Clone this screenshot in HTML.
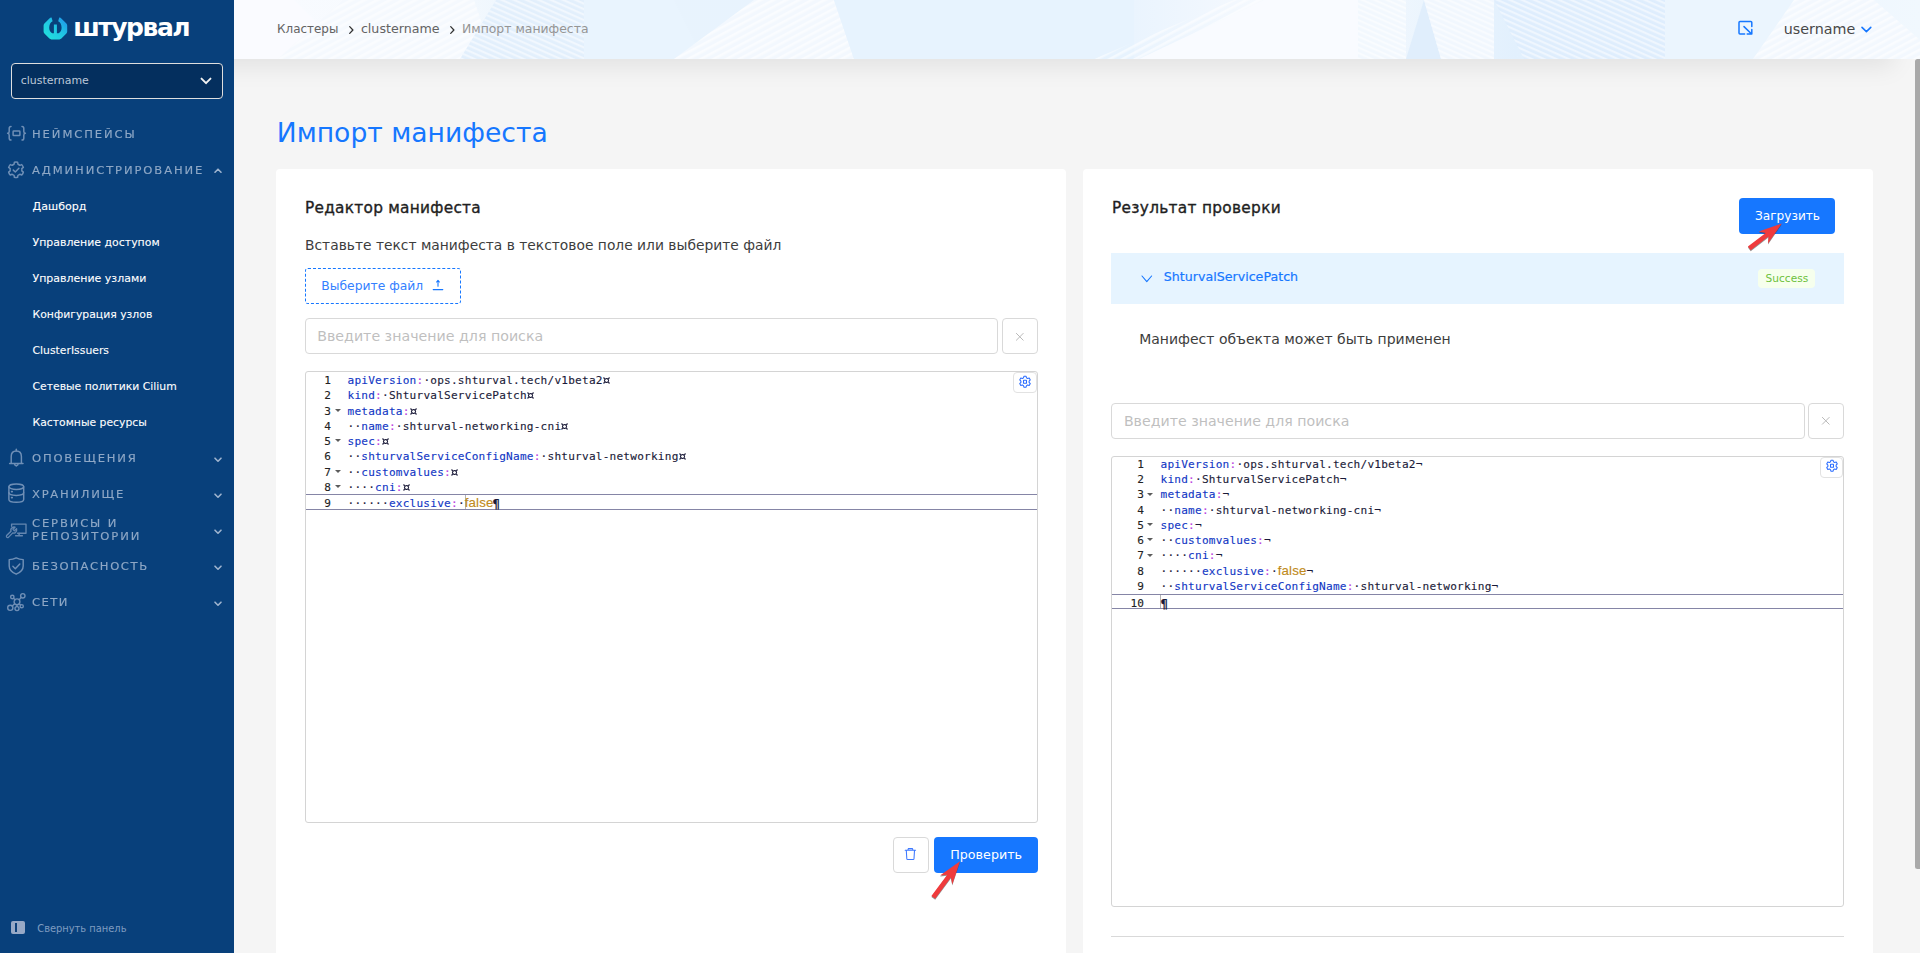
<!DOCTYPE html>
<html lang="ru">
<head>
<meta charset="utf-8">
<title>Импорт манифеста</title>
<style>
html,body{margin:0;padding:0}
body{width:1920px;height:953px;overflow:hidden;position:relative;background:#f5f5f5;font-family:"DejaVu Sans","Liberation Sans",sans-serif}
.t{position:absolute;white-space:pre;line-height:1.2;display:block}
.abs{position:absolute}
#side{left:0;top:0;width:234px;height:953px;background:#08407b}
#hdr{left:234px;top:0;width:1686px;height:59px;background:#f4f9fe}
#hsh{left:200px;top:0;width:1694px;height:59px;box-shadow:0 8px 24px rgba(0,0,0,.08)}
#hdr svg{position:absolute;left:0;top:0}
.card{background:#fff;border-radius:4px 4px 0 0}
.box{box-sizing:border-box;border:1px solid #d9d9d9;border-radius:4px;background:#fff}
.btn{background:#1677ff;border-radius:4px}
.ed{box-sizing:border-box;border:1px solid #d4d4d4;border-radius:3px;background:#fff;overflow:hidden}
.ln{position:absolute;left:0;height:15.25px;line-height:15.25px;font-family:"DejaVu Sans Mono","Liberation Mono",monospace;font-size:11.1px;letter-spacing:0.217px;white-space:pre;color:#1a1a38;-webkit-text-stroke:0.12px currentColor}
.ln .n{position:absolute;right:0;top:0;color:#222}
.k{color:#1036c4}.c{color:#b940e0}.b{color:#c08a20;font-family:"Liberation Sans","DejaVu Sans",sans-serif;font-size:13.3px;letter-spacing:0.12px;line-height:0}
.e{display:inline-block;transform:scale(1.35);transform-origin:50% 58%}
.p{display:inline-block;font-weight:bold;transform:translateY(0.8px) scale(1.05,1.12)}
.cur{position:absolute;width:1px;background:#b4b4b4}
.fold{position:absolute;width:0;height:0;border-left:3px solid transparent;border-right:3px solid transparent;border-top:3.6px solid #5c5c5c}
.al{position:absolute;left:0;right:0;height:15.25px;box-sizing:border-box;border-top:1px solid #8585a6;border-bottom:1px solid #8585a6}
</style>
</head>
<body>
<div id="hsh" class="abs"></div>
<!-- ============ SIDEBAR ============ -->
<aside>
<div id="side" class="abs"></div>
<!-- logo -->
<svg class="abs" style="left:43px;top:17px" width="25" height="23" viewBox="0 0 25 23">
<defs><linearGradient id="lg" x1="0" y1="1" x2="1" y2="0"><stop offset="0" stop-color="#22e6dc"/><stop offset="0.55" stop-color="#20c4e4"/><stop offset="1" stop-color="#1f8fea"/></linearGradient></defs>
<path d="M7.2 0.8 L8.6 0.6 L9.6 4.2 Q6.2 6 6.2 10.8 Q6.2 14.6 9.2 16.2 L10.9 16.2 L10.9 7.4 L13.9 7.4 L13.9 16.2 L15.6 16.2 Q18.6 14.6 18.6 10.8 Q18.6 6 15.2 4.2 L16.2 0.6 L17.6 0.8 L23.4 6.4 Q24.2 7.2 24.2 8.4 L24.2 14.6 Q24.2 15.8 23.4 16.6 L18.4 21.6 Q17.6 22.4 16.4 22.4 L8.4 22.4 Q7.2 22.4 6.4 21.6 L1.4 16.6 Q0.6 15.8 0.6 14.6 L0.6 8.4 Q0.6 7.2 1.4 6.4 Z" fill="url(#lg)"/>
</svg>
<!-- namespaces {=} -->
<svg class="abs" style="left:6px;top:125px" width="21" height="17" viewBox="0 0 21 17" fill="none" stroke="#6f8fb6" stroke-width="1.5" stroke-linecap="round" stroke-linejoin="round">
<path d="M5 1.6 Q3.2 1.6 3.2 3.4 L3.2 6.4 Q3.2 8.2 1.6 8.3 Q3.2 8.4 3.2 10.2 L3.2 13.2 Q3.2 15 5 15"/>
<path d="M16 1.6 Q17.8 1.6 17.8 3.4 L17.8 6.4 Q17.8 8.2 19.4 8.3 Q17.8 8.4 17.8 10.2 L17.8 13.2 Q17.8 15 16 15"/>
<rect x="7.1" y="6.1" width="6.8" height="4.5" rx="0.6"/>
</svg>
<!-- admin gear-check -->
<svg class="abs" style="left:6px;top:160px" width="20" height="20" viewBox="0 0 20 20" fill="none" stroke="#6f8fb6" stroke-width="1.45" stroke-linecap="round" stroke-linejoin="round">
<path d="M8.08 4.22 L8.39 2.22 A7.75 7.75 0 0 1 11.61 2.22 L11.92 4.22 A5.9 5.9 0 0 1 13.87 5.35 L15.76 4.61 A7.75 7.75 0 0 1 17.37 7.41 L15.79 8.67 A5.9 5.9 0 0 1 15.79 10.93 L17.37 12.19 A7.75 7.75 0 0 1 15.76 14.99 L13.87 14.25 A5.9 5.9 0 0 1 11.92 15.38 L11.61 17.38 A7.75 7.75 0 0 1 8.39 17.38 L8.08 15.38 A5.9 5.9 0 0 1 6.13 14.25 L4.24 14.99 A7.75 7.75 0 0 1 2.63 12.19 L4.21 10.93 A5.9 5.9 0 0 1 4.21 8.67 L2.63 7.41 A7.75 7.75 0 0 1 4.24 4.61 L6.13 5.35 A5.9 5.9 0 0 1 8.08 4.22 Z"/>
<path d="M7.3 10.1 L9.3 12 L12.9 8.2"/>
</svg>
<!-- bell -->
<svg class="abs" style="left:8px;top:448px" width="17" height="20" viewBox="0 0 17 20" fill="none" stroke="#6f8fb6" stroke-width="1.45" stroke-linecap="round" stroke-linejoin="round">
<path d="M8.3 1.3 L8.3 2.8"/>
<path d="M3.2 15.2 L3.2 8.4 Q3.2 3 8.3 3 Q13.4 3 13.4 8.4 L13.4 15.2"/>
<path d="M1.6 15.4 L15 15.4"/>
<path d="M6.6 16.6 L8.3 18 L10 16.6"/>
</svg>
<!-- database -->
<svg class="abs" style="left:7px;top:483px" width="19" height="21" viewBox="0 0 19 21" fill="none" stroke="#6f8fb6" stroke-width="1.45" stroke-linecap="round" stroke-linejoin="round">
<ellipse cx="9.3" cy="3.7" rx="7.4" ry="2.7"/>
<path d="M1.9 3.7 L1.9 16.4 Q1.9 19.2 9.3 19.2 Q16.7 19.2 16.7 16.4 L16.7 3.7"/>
<path d="M1.9 9.6 Q1.9 12.4 9.3 12.4 Q16.7 12.4 16.7 9.6"/>
<path d="M4.6 8.6 L5.2 8.6 M4.6 14.6 L5.2 14.6" stroke-width="1.7"/>
</svg>
<!-- services: monitor + wrench -->
<svg class="abs" style="left:5px;top:522px" width="23" height="18" viewBox="0 0 23 18" fill="none" stroke="#6486b0" stroke-width="1.35" stroke-linecap="round" stroke-linejoin="round">
<path d="M6.6 4.2 L6.6 2.1 L21 2.1 L21 11.2 L12.6 11.2"/>
<path d="M14.6 11.4 L13.6 13.6 M10.6 13.7 L17.4 13.7"/>
<path d="M1.6 13.6 L6 9.2 Q5.2 6.6 7.6 5.3 Q8.8 4.8 10 5.2 L8 7.2 L9.4 8.8 L11.6 6.8 Q12.2 9.2 10.4 10.6 Q9 11.4 7.8 10.9 L3.4 15.4 Q2.4 15.9 1.7 15.1 Q1.2 14.3 1.6 13.6 Z"/>
</svg>
<!-- shield -->
<svg class="abs" style="left:7px;top:556px" width="19" height="20" viewBox="0 0 19 20" fill="none" stroke="#6f8fb6" stroke-width="1.45" stroke-linecap="round" stroke-linejoin="round">
<path d="M9.2 1.9 Q12.4 3.6 16.2 3.6 L16.2 10 Q16.2 15.4 9.2 18.2 Q2.2 15.4 2.2 10 L2.2 3.6 Q6 3.6 9.2 1.9 Z"/>
<path d="M5.9 10.3 L8.3 12.7 L12.8 8"/>
</svg>
<!-- network -->
<svg class="abs" style="left:6px;top:592px" width="21" height="21" viewBox="0 0 21 21" fill="none" stroke="#6f8fb6" stroke-width="1.4" stroke-linecap="round" stroke-linejoin="round">
<circle cx="11" cy="9.8" r="2.9"/>
<circle cx="6.3" cy="5" r="1.7"/>
<circle cx="16.8" cy="3.8" r="2.2"/>
<circle cx="4.3" cy="15.8" r="2.6"/>
<circle cx="11" cy="16.6" r="2"/>
<circle cx="15.7" cy="14.2" r="1.6"/>
<path d="M7.6 6.3 L8.9 7.7 M13.2 7.8 L15.2 5.4 M8.7 11.7 L6.2 14 M11 12.8 L11 14.5 M13.2 11.7 L14.6 13"/>
</svg>
<!-- chevrons -->
<svg class="abs" style="left:213px;top:166px" width="10" height="9" viewBox="0 0 10 9"><path d="M2 6.2 L5 3.2 L8 6.2" fill="none" stroke="#9fb4cf" stroke-width="1.6" stroke-linecap="round" stroke-linejoin="round"/></svg>
<svg class="abs" style="left:213px;top:455px" width="10" height="9" viewBox="0 0 10 9"><path d="M2 3.2 L5 6.2 L8 3.2" fill="none" stroke="#9fb4cf" stroke-width="1.6" stroke-linecap="round" stroke-linejoin="round"/></svg>
<svg class="abs" style="left:213px;top:491px" width="10" height="9" viewBox="0 0 10 9"><path d="M2 3.2 L5 6.2 L8 3.2" fill="none" stroke="#9fb4cf" stroke-width="1.6" stroke-linecap="round" stroke-linejoin="round"/></svg>
<svg class="abs" style="left:213px;top:527px" width="10" height="9" viewBox="0 0 10 9"><path d="M2 3.2 L5 6.2 L8 3.2" fill="none" stroke="#9fb4cf" stroke-width="1.6" stroke-linecap="round" stroke-linejoin="round"/></svg>
<svg class="abs" style="left:213px;top:563px" width="10" height="9" viewBox="0 0 10 9"><path d="M2 3.2 L5 6.2 L8 3.2" fill="none" stroke="#9fb4cf" stroke-width="1.6" stroke-linecap="round" stroke-linejoin="round"/></svg>
<svg class="abs" style="left:213px;top:599px" width="10" height="9" viewBox="0 0 10 9"><path d="M2 3.2 L5 6.2 L8 3.2" fill="none" stroke="#9fb4cf" stroke-width="1.6" stroke-linecap="round" stroke-linejoin="round"/></svg>
<!-- collapse icon -->
<div class="abs" style="left:11px;top:921px;width:14px;height:13px;background:#97a9c6;border-radius:2px"></div>
<div class="abs" style="left:15px;top:923px;width:2px;height:9px;background:#0d417b"></div>

<div class="abs" style="left:11px;top:63px;width:212px;height:36px;box-sizing:border-box;border:1px solid #dedede;border-radius:4px;background:#042f5e"></div>
<svg class="abs" style="left:199px;top:75px" width="14" height="12" viewBox="0 0 14 12"><path d="M2.5 3.6 L7 8.2 L11.5 3.6" fill="none" stroke="#f2f2f2" stroke-width="1.9" stroke-linecap="round" stroke-linejoin="round"/></svg>
<nav>
<span class="t" id="logo" style='left:73.20px;top:12.70px;font-family:"DejaVu Sans","Liberation Sans",sans-serif;font-size:25px;font-weight:700;color:#ffffff;letter-spacing:-1.472px;'>штурвал</span>
<span class="t" id="csel" style='left:20.80px;top:74.30px;font-family:"DejaVu Sans","Liberation Sans",sans-serif;font-size:10.93px;font-weight:400;color:#bcc8d8;letter-spacing:0.006px;'>clustername</span>
<span class="t" id="mh0" style='left:32.20px;top:127.85px;font-family:"DejaVu Sans","Liberation Sans",sans-serif;font-size:10.6px;font-weight:400;color:#8fa8c6;letter-spacing:1.762px;-webkit-text-stroke:0.15px #8fa8c6;transform:scaleX(1.09);transform-origin:0 0;'>НЕЙМСПЕЙСЫ</span>
<span class="t" id="mh1" style='left:32.20px;top:164.15px;font-family:"DejaVu Sans","Liberation Sans",sans-serif;font-size:10.6px;font-weight:400;color:#8fa8c6;letter-spacing:1.739px;-webkit-text-stroke:0.15px #8fa8c6;transform:scaleX(1.09);transform-origin:0 0;'>АДМИНИСТРИРОВАНИЕ</span>
<span class="t" id="mh2" style='left:32.20px;top:452.05px;font-family:"DejaVu Sans","Liberation Sans",sans-serif;font-size:10.6px;font-weight:400;color:#8fa8c6;letter-spacing:1.677px;-webkit-text-stroke:0.15px #8fa8c6;transform:scaleX(1.09);transform-origin:0 0;'>ОПОВЕЩЕНИЯ</span>
<span class="t" id="mh3" style='left:32.20px;top:488.05px;font-family:"DejaVu Sans","Liberation Sans",sans-serif;font-size:10.6px;font-weight:400;color:#8fa8c6;letter-spacing:1.599px;-webkit-text-stroke:0.15px #8fa8c6;transform:scaleX(1.09);transform-origin:0 0;'>ХРАНИЛИЩЕ</span>
<span class="t" id="mh4" style='left:32.20px;top:516.65px;font-family:"DejaVu Sans","Liberation Sans",sans-serif;font-size:10.6px;font-weight:400;color:#8fa8c6;letter-spacing:1.703px;-webkit-text-stroke:0.15px #8fa8c6;transform:scaleX(1.09);transform-origin:0 0;'>СЕРВИСЫ И</span>
<span class="t" id="mh5" style='left:32.20px;top:530.15px;font-family:"DejaVu Sans","Liberation Sans",sans-serif;font-size:10.6px;font-weight:400;color:#8fa8c6;letter-spacing:1.728px;-webkit-text-stroke:0.15px #8fa8c6;transform:scaleX(1.09);transform-origin:0 0;'>РЕПОЗИТОРИИ</span>
<span class="t" id="mh6" style='left:32.20px;top:560.05px;font-family:"DejaVu Sans","Liberation Sans",sans-serif;font-size:10.6px;font-weight:400;color:#8fa8c6;letter-spacing:1.503px;-webkit-text-stroke:0.15px #8fa8c6;transform:scaleX(1.09);transform-origin:0 0;'>БЕЗОПАСНОСТЬ</span>
<span class="t" id="mh7" style='left:32.20px;top:596.05px;font-family:"DejaVu Sans","Liberation Sans",sans-serif;font-size:10.6px;font-weight:400;color:#8fa8c6;letter-spacing:1.356px;-webkit-text-stroke:0.15px #8fa8c6;transform:scaleX(1.09);transform-origin:0 0;'>СЕТИ</span>
<span class="t" id="sm0" style='left:32.50px;top:199.90px;font-family:"DejaVu Sans","Liberation Sans",sans-serif;font-size:11.1px;font-weight:400;color:#ffffff;letter-spacing:0.005px;-webkit-text-stroke:0.1px #fff;'>Дашборд</span>
<span class="t" id="sm1" style='left:32.50px;top:235.90px;font-family:"DejaVu Sans","Liberation Sans",sans-serif;font-size:10.93px;font-weight:400;color:#ffffff;letter-spacing:0.004px;-webkit-text-stroke:0.1px #fff;'>Управление доступом</span>
<span class="t" id="sm2" style='left:32.50px;top:271.90px;font-family:"DejaVu Sans","Liberation Sans",sans-serif;font-size:10.97px;font-weight:400;color:#ffffff;letter-spacing:0.002px;-webkit-text-stroke:0.1px #fff;'>Управление узлами</span>
<span class="t" id="sm3" style='left:32.50px;top:307.80px;font-family:"DejaVu Sans","Liberation Sans",sans-serif;font-size:10.83px;font-weight:400;color:#ffffff;letter-spacing:0.003px;-webkit-text-stroke:0.1px #fff;'>Конфигурация узлов</span>
<span class="t" id="sm4" style='left:32.50px;top:344.90px;font-family:"DejaVu Sans","Liberation Sans",sans-serif;font-size:10.82px;font-weight:400;color:#ffffff;letter-spacing:0.006px;-webkit-text-stroke:0.1px #fff;'>ClusterIssuers</span>
<span class="t" id="sm5" style='left:32.50px;top:380.90px;font-family:"DejaVu Sans","Liberation Sans",sans-serif;font-size:10.82px;font-weight:400;color:#ffffff;letter-spacing:0.007px;-webkit-text-stroke:0.1px #fff;'>Сетевые политики Cilium</span>
<span class="t" id="sm6" style='left:32.50px;top:416.90px;font-family:"DejaVu Sans","Liberation Sans",sans-serif;font-size:10.82px;font-weight:400;color:#ffffff;letter-spacing:0.005px;-webkit-text-stroke:0.1px #fff;'>Кастомные ресурсы</span>
<span class="t" id="collapse" style='left:37.25px;top:923.10px;font-family:"DejaVu Sans","Liberation Sans",sans-serif;font-size:9.88px;font-weight:400;color:#7f9cc0;letter-spacing:0.000px;'>Свернуть панель</span>
</nav>
</aside>

<!-- ============ HEADER ============ -->
<header>
<div id="hdr" class="abs"><svg width="1686" height="59" viewBox="0 0 1686 59" preserveAspectRatio="none">
<defs>
<pattern id="st1" width="6" height="6" patternUnits="userSpaceOnUse" patternTransform="rotate(-28)"><rect width="6" height="2.6" fill="#ffffff" fill-opacity=".55"/></pattern>
<pattern id="st2" width="5" height="5" patternUnits="userSpaceOnUse" patternTransform="rotate(24)"><rect width="5" height="2.2" fill="#ffffff" fill-opacity=".5"/></pattern>
<linearGradient id="hg" x1="0" x2="1" y1="0" y2="0"><stop offset="0" stop-color="#f9fbff"/><stop offset=".12" stop-color="#f6fafe"/><stop offset=".2" stop-color="#e8f3fd"/><stop offset=".52" stop-color="#e8f3fe"/><stop offset=".62" stop-color="#f7fafe"/><stop offset=".66" stop-color="#f4f9fe"/><stop offset=".76" stop-color="#e2f0fd"/><stop offset=".86" stop-color="#e9f4fe"/><stop offset="1" stop-color="#f1f8fe"/></linearGradient>
</defs>
<rect width="1686" height="59" fill="url(#hg)"/>
<polygon points="0,0 60,0 120,59 0,59" fill="#fafbff"/>
<polygon points="44,59 110,0 240,0 260,59" fill="#f5f9fe"/>
<polygon points="44,59 110,0 240,0 260,59" fill="url(#st1)"/>
<polygon points="226,59 262,0 350,0 350,59" fill="#e2effc"/>
<polygon points="226,59 262,0 350,0 350,59" fill="url(#st2)"/>
<polygon points="350,0 440,0 470,59 350,59" fill="#e9f4fe"/>
<polygon points="440,59 520,0 600,0 620,59" fill="#f3f8fe"/>
<polygon points="440,59 520,0 600,0 620,59" fill="url(#st1)"/>
<polygon points="620,59 600,0 900,0 900,59" fill="#e7f3fe"/>
<polygon points="905,59 1030,0 1124,0 1124,59" fill="#f9fbff"/>
<polygon points="860,59 1000,0 1030,0 905,59" fill="url(#st1)"/>
<polygon points="1124,0 1172,0 1172,59 1124,59" fill="#f2f8fe"/>
<polygon points="1124,0 1172,0 1172,59 1124,59" fill="url(#st2)"/>
<polygon points="1172,59 1190,0 1207,59" fill="#e0eefc"/>
<polygon points="1190,0 1260,0 1260,59 1207,59" fill="#f1f7fe"/>
<polygon points="1190,0 1260,0 1260,59 1207,59" fill="url(#st2)"/>
<polygon points="1260,0 1431,0 1431,59 1290,59" fill="#deedfd"/>
<polygon points="1260,0 1431,0 1431,59 1290,59" fill="url(#st2)"/>
<polygon points="1431,0 1560,0 1519,59 1431,59" fill="#ebf5fe"/>
<polygon points="1519,59 1560,0 1640,0 1686,40 1686,59" fill="#f3f8fe"/>
<polygon points="1519,59 1560,0 1640,0 1686,40 1686,59" fill="url(#st1)"/>
</svg>
</div>
<svg class="abs" style="left:346.6px;top:24.6px" width="8" height="10" viewBox="0 0 8 10"><path d="M2.7 1.6 L5.9 5 L2.7 8.4" fill="none" stroke="#333" stroke-width="1.3" stroke-linecap="round" stroke-linejoin="round"/></svg>
<svg class="abs" style="left:447.7px;top:24.6px" width="8" height="10" viewBox="0 0 8 10"><path d="M2.7 1.6 L5.9 5 L2.7 8.4" fill="none" stroke="#333" stroke-width="1.3" stroke-linecap="round" stroke-linejoin="round"/></svg>
<svg class="abs" style="left:1737px;top:19px" width="18" height="18" viewBox="0 0 18 18" fill="none" stroke="#1677ff" stroke-width="1.5" stroke-linecap="round" stroke-linejoin="round">
<path d="M7.6 15.1 L3 15.1 Q2 15.1 2 14.1 L2 3.5 Q2 2.5 3 2.5 L13.8 2.5 Q14.8 2.5 14.8 3.5 L14.8 7.6"/>
<path d="M7 7.6 L14.6 15 M14.8 10.6 L14.8 15.1 L10.2 15.1"/>
</svg>
<svg class="abs" style="left:1860px;top:25px" width="13" height="9" viewBox="0 0 13 9"><path d="M2 2.4 L6.4 6.6 L10.8 2.4" fill="none" stroke="#1677ff" stroke-width="1.6" stroke-linecap="round" stroke-linejoin="round"/></svg>

<span class="t" id="bc0" style='left:277.00px;top:21.80px;font-family:"DejaVu Sans","Liberation Sans",sans-serif;font-size:11.96px;font-weight:400;color:#636363;letter-spacing:0.004px;'>Кластеры</span>
<span class="t" id="bc1" style='left:360.90px;top:20.80px;font-family:"DejaVu Sans","Liberation Sans",sans-serif;font-size:12.65px;font-weight:400;color:#636363;letter-spacing:0.008px;'>clustername</span>
<span class="t" id="bc2" style='left:462.00px;top:21.80px;font-family:"DejaVu Sans","Liberation Sans",sans-serif;font-size:12.41px;font-weight:400;color:#959595;letter-spacing:0.005px;'>Импорт манифеста</span>
<span class="t" id="user" style='left:1783.75px;top:20.50px;font-family:"DejaVu Sans","Liberation Sans",sans-serif;font-size:14.29px;font-weight:400;color:#484848;letter-spacing:0.006px;'>username</span>
</header>

<!-- ============ MAIN ============ -->
<main>
<span class="t" id="title" style='left:276.80px;top:116.90px;font-family:"DejaVu Sans","Liberation Sans",sans-serif;font-size:26.59px;font-weight:400;color:#1677ff;letter-spacing:0.005px;'>Импорт манифеста</span>
<!-- left card: manifest editor -->
<section>
<div class="abs card" style="left:276px;top:169px;width:790px;height:790px"></div>
<div class="abs" style="left:305px;top:268px;width:156px;height:36px;box-sizing:border-box;border:1px dashed #1677ff;border-radius:3px"></div>
<div class="abs box" style="left:305px;top:318px;width:693px;height:36px"></div>
<div class="abs box" style="left:1002px;top:318px;width:36px;height:36px"></div>
<div class="abs ed" id="ed1" style="left:305px;top:371px;width:733px;height:452px"><div class="al" style="top:122px;height:16px"></div>
<div class="cur" style="top:123px;height:14px;left:159.4px"></div>
<div class="ln" style="top:1.10px;width:25.2px"><span class="n">1</span></div>
<div class="ln" style="top:1.10px;left:41.5px"><span class="k">apiVersion</span><span class="c">:</span>·ops.shturval.tech/v1beta2<span class="e">¤</span></div>
<div class="ln" style="top:16.35px;width:25.2px"><span class="n">2</span></div>
<div class="ln" style="top:16.35px;left:41.5px"><span class="k">kind</span><span class="c">:</span>·ShturvalServicePatch<span class="e">¤</span></div>
<div class="ln" style="top:31.60px;width:25.2px"><span class="n">3</span></div>
<div class="fold" style="left:28.50px;top:36.80px"></div>
<div class="ln" style="top:31.60px;left:41.5px"><span class="k">metadata</span><span class="c">:</span><span class="e">¤</span></div>
<div class="ln" style="top:46.85px;width:25.2px"><span class="n">4</span></div>
<div class="ln" style="top:46.85px;left:41.5px">··<span class="k">name</span><span class="c">:</span>·shturval-networking-cni<span class="e">¤</span></div>
<div class="ln" style="top:62.10px;width:25.2px"><span class="n">5</span></div>
<div class="fold" style="left:28.50px;top:67.30px"></div>
<div class="ln" style="top:62.10px;left:41.5px"><span class="k">spec</span><span class="c">:</span><span class="e">¤</span></div>
<div class="ln" style="top:77.35px;width:25.2px"><span class="n">6</span></div>
<div class="ln" style="top:77.35px;left:41.5px">··<span class="k">shturvalServiceConfigName</span><span class="c">:</span>·shturval-networking<span class="e">¤</span></div>
<div class="ln" style="top:92.60px;width:25.2px"><span class="n">7</span></div>
<div class="fold" style="left:28.50px;top:97.80px"></div>
<div class="ln" style="top:92.60px;left:41.5px">··<span class="k">customvalues</span><span class="c">:</span><span class="e">¤</span></div>
<div class="ln" style="top:107.85px;width:25.2px"><span class="n">8</span></div>
<div class="fold" style="left:28.50px;top:113.05px"></div>
<div class="ln" style="top:107.85px;left:41.5px">····<span class="k">cni</span><span class="c">:</span><span class="e">¤</span></div>
<div class="ln" style="top:123.70px;width:25.2px"><span class="n">9</span></div>
<div class="ln" style="top:123.70px;left:41.5px">······<span class="k">exclusive</span><span class="c">:</span>·<span class="b">false</span><span class="p">¶</span></div></div>
<div class="abs box" style="left:893px;top:837px;width:36px;height:36px"></div>
<div class="abs btn" style="left:934px;top:837px;width:104px;height:36px"></div>
<!-- upload icon -->
<svg class="abs" style="left:431px;top:278px" width="14" height="14" viewBox="0 0 14 14" fill="none" stroke="#1677ff" stroke-width="1.1" stroke-linecap="round" stroke-linejoin="round">
<path d="M7 2.6 L7 8.3 M5.6 4 L7 2.4 L8.4 4 M2.2 11.6 L11.8 11.6"/>
</svg>
<!-- X buttons -->
<svg class="abs" style="left:1014px;top:331px" width="12" height="12" viewBox="0 0 12 12"><path d="M2.4 2.4 L9.2 9.2 M9.2 2.4 L2.4 9.2" fill="none" stroke="#b9b9b9" stroke-width="1" stroke-linecap="round"/></svg>
<!-- gear buttons -->
<div class="abs" style="left:1013px;top:372px;width:24px;height:21px;box-sizing:border-box;border:1px solid #e2e2e2;border-radius:4px;background:#fff"></div>
<svg class="abs" style="left:1018px;top:375px" width="14" height="14" viewBox="0 0 14 14" fill="none" stroke="#2a6cff" stroke-width="1.05" stroke-linejoin="round">
<path d="M5.9 1.3 L8.1 1.3 L8.5 2.9 L9.6 3.5 L11.2 3 L12.3 4.9 L11.1 6.1 L11.1 7.4 L12.3 8.6 L11.2 10.5 L9.6 10 L8.5 10.6 L8.1 12.2 L5.9 12.2 L5.5 10.6 L4.4 10 L2.8 10.5 L1.7 8.6 L2.9 7.4 L2.9 6.1 L1.7 4.9 L2.8 3 L4.4 3.5 L5.5 2.9 Z"/>
<rect x="5.5" y="5.3" width="3" height="3" rx="0.4"/>
</svg>
<!-- trash -->
<svg class="abs" style="left:903px;top:846px" width="15" height="16" viewBox="0 0 15 16" fill="none" stroke="#3d78ff" stroke-width="1.05" stroke-linejoin="round" stroke-linecap="round">
<path d="M2.2 4.3 L12.6 4.3 M4.9 4.2 L5.3 2.6 L9.5 2.6 L9.9 4.2 M3.3 4.4 L3.8 12.7 Q3.85 13.5 4.7 13.5 L10.1 13.5 Q10.95 13.5 11 12.7 L11.5 4.4"/>
</svg>

<span class="t" id="h1" style='left:305.00px;top:199.00px;font-family:"DejaVu Sans","Liberation Sans",sans-serif;font-size:15.35px;font-weight:400;color:#1f1f1f;letter-spacing:0.263px;-webkit-text-stroke:0.36px #1f1f1f;'>Редактор манифеста</span>
<span class="t" id="p1" style='left:305.00px;top:237.20px;font-family:"DejaVu Sans","Liberation Sans",sans-serif;font-size:13.83px;font-weight:400;color:#3d3d3d;letter-spacing:0.003px;'>Вставьте текст манифеста в текстовое поле или выберите файл</span>
<span class="t" id="upl" style='left:321.30px;top:278.60px;font-family:"DejaVu Sans","Liberation Sans",sans-serif;font-size:12.32px;font-weight:400;color:#3380ff;letter-spacing:0.003px;'>Выберите файл</span>
<span class="t" id="ph1" style='left:317.25px;top:327.80px;font-family:"DejaVu Sans","Liberation Sans",sans-serif;font-size:14.19px;font-weight:400;color:#bfbfbf;letter-spacing:0.002px;'>Введите значение для поиска</span>
<span class="t" id="btn1" style='left:950.25px;top:847.00px;font-family:"DejaVu Sans","Liberation Sans",sans-serif;font-size:12.7px;font-weight:400;color:#ffffff;letter-spacing:0.005px;'>Проверить</span>
</section>
<!-- right card: validation result -->
<section>
<div class="abs card" style="left:1083px;top:169px;width:790px;height:790px"></div>
<div class="abs btn" style="left:1739px;top:198px;width:96px;height:36px"></div>
<div class="abs" style="left:1111px;top:253px;width:733px;height:51px;background:#e6f4ff"></div>
<div class="abs" style="left:1758px;top:269px;width:57px;height:19px;background:#f6ffed;border-radius:4px"></div>
<div class="abs box" style="left:1111px;top:403px;width:694px;height:36px"></div>
<div class="abs box" style="left:1808px;top:403px;width:36px;height:36px"></div>
<div class="abs ed" id="ed2" style="left:1111px;top:456px;width:733px;height:451px"><div class="al" style="top:137px;height:15px"></div>
<div class="cur" style="top:138px;height:13px;left:48.4px"></div>
<div class="ln" style="top:-0.15px;width:32.2px"><span class="n">1</span></div>
<div class="ln" style="top:-0.15px;left:48.5px"><span class="k">apiVersion</span><span class="c">:</span>·ops.shturval.tech/v1beta2¬</div>
<div class="ln" style="top:15.10px;width:32.2px"><span class="n">2</span></div>
<div class="ln" style="top:15.10px;left:48.5px"><span class="k">kind</span><span class="c">:</span>·ShturvalServicePatch¬</div>
<div class="ln" style="top:30.35px;width:32.2px"><span class="n">3</span></div>
<div class="fold" style="left:35.40px;top:35.55px"></div>
<div class="ln" style="top:30.35px;left:48.5px"><span class="k">metadata</span><span class="c">:</span>¬</div>
<div class="ln" style="top:45.60px;width:32.2px"><span class="n">4</span></div>
<div class="ln" style="top:45.60px;left:48.5px">··<span class="k">name</span><span class="c">:</span>·shturval-networking-cni¬</div>
<div class="ln" style="top:60.85px;width:32.2px"><span class="n">5</span></div>
<div class="fold" style="left:35.40px;top:66.05px"></div>
<div class="ln" style="top:60.85px;left:48.5px"><span class="k">spec</span><span class="c">:</span>¬</div>
<div class="ln" style="top:76.10px;width:32.2px"><span class="n">6</span></div>
<div class="fold" style="left:35.40px;top:81.30px"></div>
<div class="ln" style="top:76.10px;left:48.5px">··<span class="k">customvalues</span><span class="c">:</span>¬</div>
<div class="ln" style="top:91.35px;width:32.2px"><span class="n">7</span></div>
<div class="fold" style="left:35.40px;top:96.55px"></div>
<div class="ln" style="top:91.35px;left:48.5px">····<span class="k">cni</span><span class="c">:</span>¬</div>
<div class="ln" style="top:106.60px;width:32.2px"><span class="n">8</span></div>
<div class="ln" style="top:106.60px;left:48.5px">······<span class="k">exclusive</span><span class="c">:</span>·<span class="b">false</span>¬</div>
<div class="ln" style="top:121.85px;width:32.2px"><span class="n">9</span></div>
<div class="ln" style="top:121.85px;left:48.5px">··<span class="k">shturvalServiceConfigName</span><span class="c">:</span>·shturval-networking¬</div>
<div class="ln" style="top:138.80px;width:32.2px"><span class="n">10</span></div>
<div class="ln" style="top:138.80px;left:48.5px"><span class="p">¶</span></div></div>
<div class="abs" style="left:1111px;top:936px;width:733px;height:1px;background:#d9d9d9"></div>
<svg class="abs" style="left:1820.3px;top:414.7px" width="12" height="12" viewBox="0 0 12 12"><path d="M2.4 2.4 L9.2 9.2 M9.2 2.4 L2.4 9.2" fill="none" stroke="#b9b9b9" stroke-width="1" stroke-linecap="round"/></svg>
<div class="abs" style="left:1820px;top:456.5px;width:23px;height:21px;box-sizing:border-box;border:1px solid #e2e2e2;border-radius:4px;background:#fff"></div>
<svg class="abs" style="left:1824.8px;top:459.2px" width="14" height="14" viewBox="0 0 14 14" fill="none" stroke="#2a6cff" stroke-width="1.05" stroke-linejoin="round">
<path d="M5.9 1.3 L8.1 1.3 L8.5 2.9 L9.6 3.5 L11.2 3 L12.3 4.9 L11.1 6.1 L11.1 7.4 L12.3 8.6 L11.2 10.5 L9.6 10 L8.5 10.6 L8.1 12.2 L5.9 12.2 L5.5 10.6 L4.4 10 L2.8 10.5 L1.7 8.6 L2.9 7.4 L2.9 6.1 L1.7 4.9 L2.8 3 L4.4 3.5 L5.5 2.9 Z"/>
<rect x="5.5" y="5.3" width="3" height="3" rx="0.4"/>
</svg>
<!-- collapse chevron -->
<svg class="abs" style="left:1140px;top:273px" width="14" height="12" viewBox="0 0 14 12"><path d="M2 3 L6.8 8.6 L11.6 3" fill="none" stroke="#1677ff" stroke-width="1.1" stroke-linecap="round" stroke-linejoin="round"/></svg>

<span class="t" id="h2" style='left:1112.00px;top:199.00px;font-family:"DejaVu Sans","Liberation Sans",sans-serif;font-size:15.35px;font-weight:400;color:#1f1f1f;letter-spacing:0.302px;-webkit-text-stroke:0.36px #1f1f1f;'>Результат проверки</span>
<span class="t" id="btn2" style='left:1755.00px;top:209.00px;font-family:"DejaVu Sans","Liberation Sans",sans-serif;font-size:12.13px;font-weight:400;color:#ffffff;letter-spacing:0.002px;'>Загрузить</span>
<span class="t" id="ssp" style='left:1163.80px;top:269.20px;font-family:"DejaVu Sans","Liberation Sans",sans-serif;font-size:12.63px;font-weight:400;color:#1677ff;letter-spacing:0.004px;-webkit-text-stroke:0.2px #1677ff;'>ShturvalServicePatch</span>
<span class="t" id="succ" style='left:1765.60px;top:271.80px;font-family:"DejaVu Sans","Liberation Sans",sans-serif;font-size:10.58px;font-weight:400;color:#6cbf3c;letter-spacing:0.001px;'>Success</span>
<span class="t" id="p2" style='left:1139.20px;top:331.20px;font-family:"DejaVu Sans","Liberation Sans",sans-serif;font-size:13.98px;font-weight:400;color:#3d3d3d;letter-spacing:0.009px;'>Манифест объекта может быть применен</span>
<span class="t" id="ph2" style='left:1123.90px;top:413.00px;font-family:"DejaVu Sans","Liberation Sans",sans-serif;font-size:14.16px;font-weight:400;color:#bfbfbf;letter-spacing:0.004px;'>Введите значение для поиска</span>
</section>
<!-- red arrows -->
<svg class="abs" style="left:920px;top:850px;filter:drop-shadow(0.6px 1px 0.6px rgba(60,60,60,.55))" width="56" height="60" viewBox="920 850 56 60"><polygon points="935.2,898.8 950.9,877.5 952.3,884.5 960.0,861.2 940.0,875.5 947.2,874.8 931.4,896.0" fill="#ef3b3d"/></svg>
<svg class="abs" style="left:1735px;top:212px;filter:drop-shadow(0.6px 1px 0.6px rgba(60,60,60,.55))" width="60" height="50" viewBox="1735 212 60 50"><polygon points="1750.7,250.2 1768.5,236.5 1768.0,243.6 1781.8,223.4 1758.7,231.6 1765.7,232.9 1747.9,246.6" fill="#ef3b3d"/></svg>

</main>

<!-- scrollbar -->
<div class="abs" style="left:1915px;top:59px;width:6px;height:810px;background:#a9a9a9;border-radius:2.5px 0 0 2.5px"></div>
</body>
</html>
